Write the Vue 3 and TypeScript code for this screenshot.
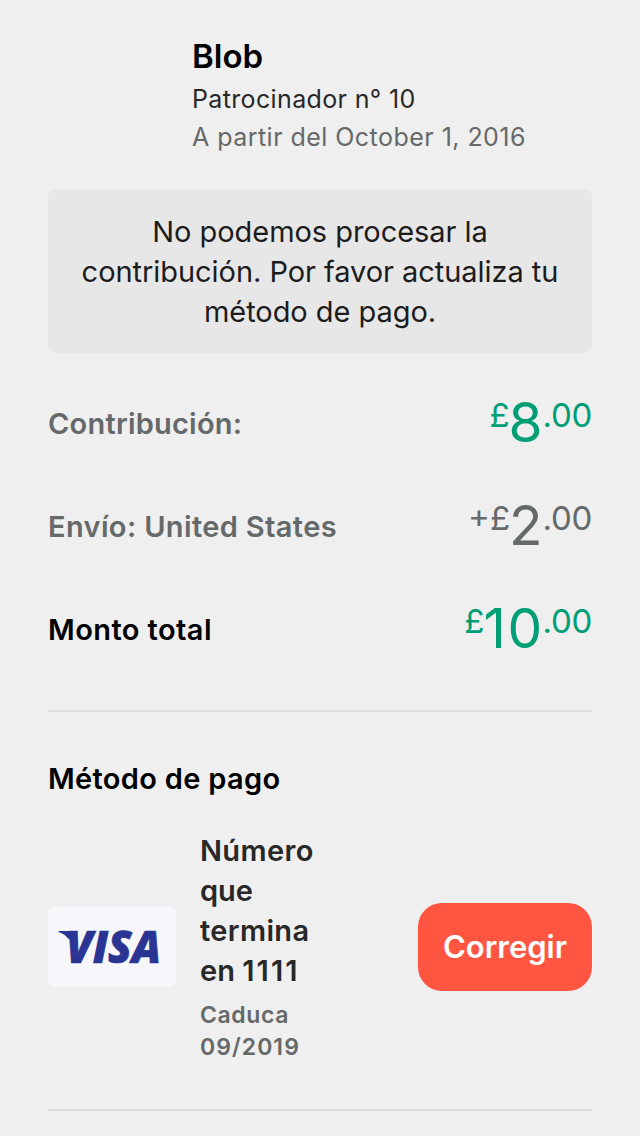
<script setup lang="ts">
interface AmountRow {
  key: string
  label: string
  prefix: string
  whole: string
  tone: string
}

const rows: AmountRow[] = [
  { key: 'pledge', label: 'Contribución:', prefix: '£', whole: '8', tone: 'green' },
  { key: 'shipping', label: 'Envío: United States', prefix: '+£', whole: '2', tone: 'grey' },
  { key: 'total', label: 'Monto total', prefix: '£', whole: '10', tone: 'green' },
]
</script>

<template>
  <main class="screen">
    <header class="backer">
      <h1 class="name">Blob</h1>
      <p class="number">Patrocinador n° 10</p>
      <p class="since">A partir del October 1, 2016</p>
    </header>

    <section class="alert">
      <span>No podemos procesar la</span>
      <span>contribución. Por favor actualiza tu</span>
      <span>método de pago.</span>
    </section>

    <section class="amounts">
      <div v-for="row in rows" :key="row.key" class="row" :class="row.key">
        <span class="label">{{ row.label }}</span>
        <span class="money" :class="row.tone">
          <span class="prefix">{{ row.prefix }}</span>
          <span class="whole">{{ row.whole }}</span>
          <span class="cents">.00</span>
        </span>
      </div>
    </section>

    <hr class="rule" />

    <h2 class="title">Método de pago</h2>

    <section class="payment">
      <div class="card">
        <svg width="128" height="80" viewBox="0 0 128 80" role="img" aria-label="Visa">
          <path d="M10.5 24H27L30 38L19.5 31Q17 27 10.5 25Z" fill="#2a3593" />
          <text x="18" y="55.5" textLength="95" lengthAdjust="spacingAndGlyphs" class="visa">VISA</text>
        </svg>
      </div>
      <div class="details">
        <p class="ending">
          <span class="e1">Número</span>
          <span class="e2">que</span>
          <span class="e3">termina</span>
          <span class="e4">en <span class="digits">1111</span></span>
        </p>
        <p class="expiry">
          <span class="x1">Caduca</span>
          <span class="x2">09/2019</span>
        </p>
      </div>
      <button class="fix" type="button">Corregir</button>
    </section>

    <hr class="rule" />
  </main>
</template>

<style>
body {
  background: #efefef;
}
</style>

<style scoped>
.screen {
  box-sizing: border-box;
  width: 640px;
  height: 1136px;
  overflow: hidden;
  padding: 34px 48px 0;
  background: #efefef;
  font-family: Inter, "Liberation Sans", sans-serif;
  color: #222;
}
h1, h2, p { margin: 0; }
.backer { padding-left: 144px; height: 155px; box-sizing: border-box; }
.name { font-size: 33px; line-height: 44px; font-weight: 600; color: #000; }
.number { font-size: 25px; line-height: 38px; margin-top: 2px; letter-spacing: 0.36px; color: #282828; }
.since { font-size: 25px; line-height: 38px; letter-spacing: 0.46px; color: #656969; }
.alert {
  box-sizing: border-box;
  height: 164px;
  padding-top: 23px;
  border-radius: 8px;
  background: #e7e7e7;
  font-size: 29px;
  line-height: 40px;
  letter-spacing: -0.05px;
  text-align: center;
  color: #1c1c1c;
}
.alert span, .ending > span, .expiry span { display: block; white-space: nowrap; }
.amounts { padding-top: 20px; }
.row { display: flex; justify-content: space-between; height: 103px; }
.label { font-size: 29px; line-height: 40px; padding-top: 31px; font-weight: 600; color: #656969; }
.pledge .label { letter-spacing: 0.22px; }
.shipping .label { letter-spacing: 0.36px; }
.total .label { letter-spacing: 0.42px; color: #000; }
.money { display: flex; align-items: flex-start; }
.prefix, .cents { font-size: 33px; line-height: 40px; padding-top: 22px; font-weight: 400; }
.cents { letter-spacing: -0.3px; }
.whole { font-size: 55px; line-height: 60px; padding-top: 19px; margin-left: -1px; }
.total .whole { letter-spacing: 1.5px; margin-right: -1px; }
.green { color: #009e74; }
.grey { color: #656969; }
.rule { height: 2px; margin: 0; border: 0; background: #dcdcdc; }
.amounts + .rule { margin-top: 28px; }
.title { margin-top: 47px; font-size: 29px; line-height: 40px; letter-spacing: 0.32px; font-weight: 600; color: #000; }
.payment { display: flex; align-items: center; height: 232px; margin-top: 32px; margin-bottom: 46px; }
.card { width: 128px; height: 80px; border-radius: 5px; background: #f7f7fb; }
.card svg { display: block; }
.visa { font: italic 800 44px "Open Sans", "Noto Sans", sans-serif; fill: #2a3593; stroke: #2a3593; stroke-width: 0.7px; }
.details { margin-left: 24px; width: 130px; }
.ending { font-size: 29px; line-height: 40px; font-weight: 600; color: #282828; }
.e1 { letter-spacing: 0.35px; }
.e3 { letter-spacing: 0.35px; }
.digits { letter-spacing: 2.1px; }
.expiry { margin-top: 8px; font-size: 23px; line-height: 32px; font-weight: 600; color: #656969; }
.x1 { letter-spacing: 0.6px; }
.x2 { letter-spacing: 1.05px; }
.fix {
  width: 174px;
  height: 88px;
  margin-left: auto;
  padding: 0;
  border: 0;
  border-radius: 24px;
  background: #ff5541;
  color: #fff;
  font: 600 31px/40px Inter, "Liberation Sans", sans-serif;
}
</style>
